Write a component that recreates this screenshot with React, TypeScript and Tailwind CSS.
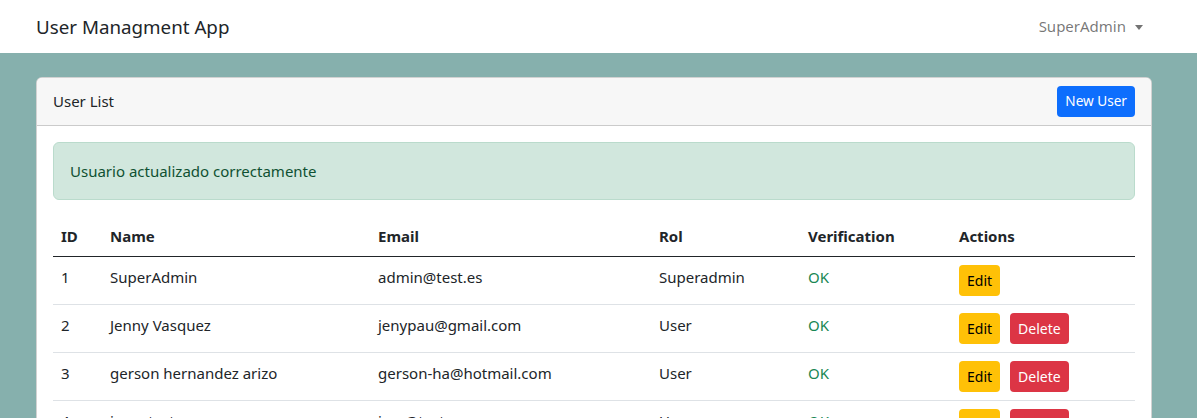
const users = [
  { id: 1, name: 'SuperAdmin', email: 'admin@test.es', rol: 'Superadmin', verified: 'OK', canDelete: false },
  { id: 2, name: 'Jenny Vasquez', email: 'jenypau@gmail.com', rol: 'User', verified: 'OK', canDelete: true },
  { id: 3, name: 'gerson hernandez arizo', email: 'gerson-ha@hotmail.com', rol: 'User', verified: 'OK', canDelete: true },
  { id: 4, name: 'jessy test', email: 'jess@test.es', rol: 'User', verified: 'OK', canDelete: true },
];

function App() {
  return (
    <div className="min-h-[418px] bg-[#86b0ad] text-[#212529] font-['Segoe_UI','Noto_Sans',sans-serif]">
      {/* navbar */}
      <nav className="h-[53px] bg-white flex items-center justify-between pl-[36px] pr-[54px]">
        <span className="text-[18.75px] leading-[30px]">User Managment App</span>
        <span className="flex items-center text-[15px] text-black/55">
          SuperAdmin
          <span className="ml-[9px] mt-[2px] w-0 h-0 border-x-[4px] border-x-transparent border-t-[5px] border-t-black/55"></span>
        </span>
      </nav>

      <div className="pl-[36px] pr-[45px] pt-[24px]">
        <div className="bg-white border border-black/[0.175] rounded-[6px] overflow-hidden">
          <div className="flex items-center justify-between h-[48px] px-[16px] bg-[#f7f7f7] border-b border-black/[0.175]">
            <span className="text-[15px]">User List</span>
            <button className="h-[31px] px-[8px] text-[13.6px] text-white bg-[#0d6efd] rounded-[4px]">New User</button>
          </div>

          <div className="p-[16px]">
            <div className="h-[58px] flex items-center px-[16px] bg-[#d1e7dd] border border-[#badbcc] text-[#0f5132] text-[15px] rounded-[6px] mb-[16px]">
              Usuario actualizado correctamente
            </div>

            <table className="w-full table-fixed border-collapse text-[15px] leading-[24px]">
              <colgroup>
                <col className="w-[49px]" />
                <col className="w-[268px]" />
                <col className="w-[281px]" />
                <col className="w-[149px]" />
                <col className="w-[151px]" />
                <col />
              </colgroup>
              <thead>
                <tr className="border-b border-[#212529] text-left">
                  <th className="p-[8px] font-bold">ID</th>
                  <th className="p-[8px] font-bold">Name</th>
                  <th className="p-[8px] font-bold">Email</th>
                  <th className="p-[8px] font-bold">Rol</th>
                  <th className="p-[8px] font-bold">Verification</th>
                  <th className="p-[8px] font-bold">Actions</th>
                </tr>
              </thead>
              <tbody>
                {users.map((u) => (
                  <tr key={u.id} className="border-b border-[#dee2e6] h-[48px]">
                    <td className="px-[8px] pt-[8px] pb-[15px] align-top">{u.id}</td>
                    <td className="px-[8px] pt-[8px] pb-[15px] align-top">{u.name}</td>
                    <td className="px-[8px] pt-[8px] pb-[15px] align-top">{u.email}</td>
                    <td className="px-[8px] pt-[8px] pb-[15px] align-top">{u.rol}</td>
                    <td className="px-[8px] pt-[8px] pb-[15px] align-top text-[#198754]">{u.verified}</td>
                    <td className="px-[8px] py-[8px] align-top">
                      <div className="flex gap-[10px]">
                        <button className="h-[31px] px-[8px] text-[14px] bg-[#ffc107] text-black rounded-[4px]">Edit</button>
                        {u.canDelete && (
                          <button className="h-[31px] px-[8px] text-[14px] bg-[#dc3545] text-white rounded-[4px]">Delete</button>
                        )}
                      </div>
                    </td>
                  </tr>
                ))}
              </tbody>
            </table>
          </div>
        </div>
      </div>
    </div>
  );
}

export default App;
